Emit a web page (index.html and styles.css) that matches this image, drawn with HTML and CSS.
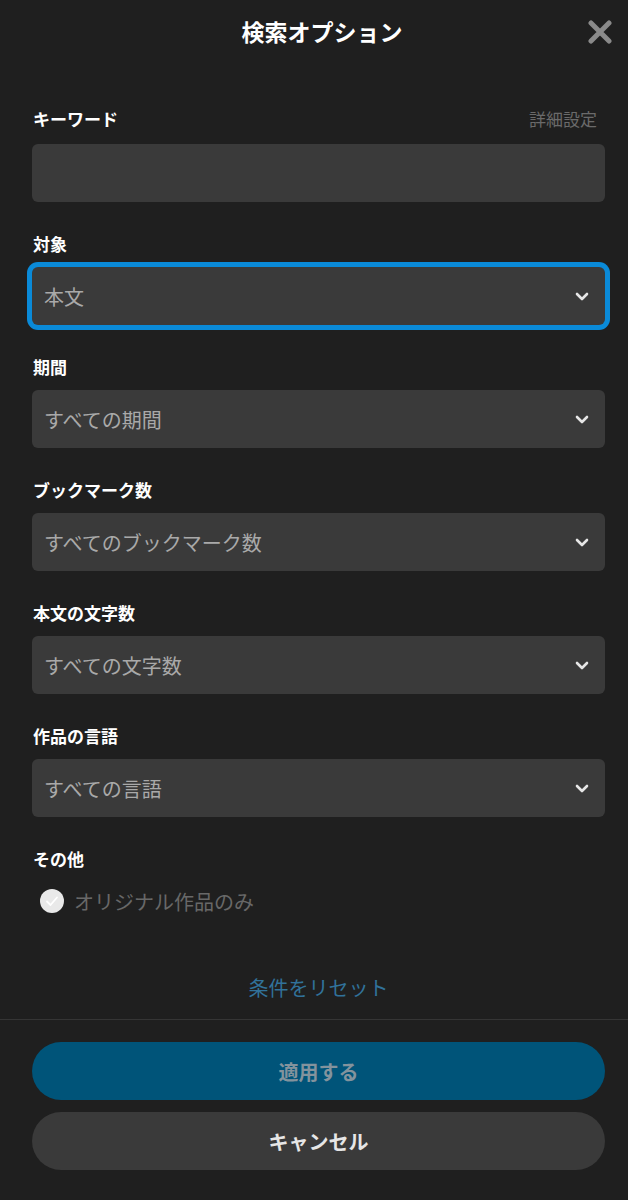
FILE: index.html
```html
<!DOCTYPE html>
<html lang="ja">
<head>
    <meta charset="UTF-8">
    <meta name="viewport" content="width=device-width, initial-scale=1.0">
    <title>検索オプション</title>
    <link rel="stylesheet" href="styles.css">
</head>
<body>
    <div class="sheet">
        <div class="header">
            <span></span>
            <h1>検索オプション</h1>
            <button class="close" type="button" aria-label="閉じる">
                <svg width="24" height="24" viewBox="0 0 24 24"><path d="M3 3 L21 21 M21 3 L3 21" stroke="#8a8a8a" stroke-width="5" stroke-linecap="round"/></svg>
            </button>
        </div>

        <form class="options">
            <div class="field">
                <div class="label-row">
                    <label for="keyword">キーワード</label>
                    <span class="advanced">詳細設定</span>
                </div>
                <input class="box" type="text" id="keyword">
            </div>

            <div class="field">
                <label>対象</label>
                <div class="box select focused">
                    <span>本文</span>
                    <svg class="chev" width="14" height="9" viewBox="0 0 14 9"><polyline points="2,2 7,7 12,2" fill="none" stroke="#e6e6e6" stroke-width="2.6" stroke-linecap="round" stroke-linejoin="round"/></svg>
                </div>
            </div>

            <div class="field">
                <label>期間</label>
                <div class="box select">
                    <span>すべての期間</span>
                    <svg class="chev" width="14" height="9" viewBox="0 0 14 9"><polyline points="2,2 7,7 12,2" fill="none" stroke="#e6e6e6" stroke-width="2.6" stroke-linecap="round" stroke-linejoin="round"/></svg>
                </div>
            </div>

            <div class="field">
                <label>ブックマーク数</label>
                <div class="box select">
                    <span>すべてのブックマーク数</span>
                    <svg class="chev" width="14" height="9" viewBox="0 0 14 9"><polyline points="2,2 7,7 12,2" fill="none" stroke="#e6e6e6" stroke-width="2.6" stroke-linecap="round" stroke-linejoin="round"/></svg>
                </div>
            </div>

            <div class="field">
                <label>本文の文字数</label>
                <div class="box select">
                    <span>すべての文字数</span>
                    <svg class="chev" width="14" height="9" viewBox="0 0 14 9"><polyline points="2,2 7,7 12,2" fill="none" stroke="#e6e6e6" stroke-width="2.6" stroke-linecap="round" stroke-linejoin="round"/></svg>
                </div>
            </div>

            <div class="field">
                <label>作品の言語</label>
                <div class="box select">
                    <span>すべての言語</span>
                    <svg class="chev" width="14" height="9" viewBox="0 0 14 9"><polyline points="2,2 7,7 12,2" fill="none" stroke="#e6e6e6" stroke-width="2.6" stroke-linecap="round" stroke-linejoin="round"/></svg>
                </div>
            </div>

            <div class="field other">
                <label>その他</label>
                <div class="check-row">
                    <span class="check">
                        <svg width="24" height="24" viewBox="0 0 24 24"><circle cx="12" cy="12" r="12" fill="#e9e9e9"/><polyline points="7,12.5 10.5,16 17,8.5" fill="none" stroke="#ffffff" stroke-width="1.8" stroke-linecap="round" stroke-linejoin="round"/></svg>
                    </span>
                    <span class="check-text">オリジナル作品のみ</span>
                </div>
            </div>

            <div class="reset">条件をリセット</div>
        </form>

        <div class="footer">
            <button class="btn apply" type="button">適用する</button>
            <button class="btn cancel" type="button">キャンセル</button>
        </div>
    </div>
</body>
</html>
```

FILE: styles.css
```css
body {
    margin: 0;
    background: #1f1f1f;
    font-family: "Noto Sans CJK JP", "Noto Sans", sans-serif;
    color: #fff;
}
.sheet {
    width: 628px;
    height: 1200px;
    display: flex;
    flex-direction: column;
}
.header {
    height: 66px;
    display: grid;
    grid-template-columns: 1fr auto 1fr;
    align-items: center;
    padding: 0 16px 0 32px;
}
.header h1 {
    margin: 0 0 4px;
    font-size: 23px;
    font-weight: bold;
    line-height: 30px;
    color: #fff;
}
.close {
    justify-self: end;
    background: none;
    border: none;
    padding: 0;
    width: 24px;
    height: 24px;
    margin-bottom: 2px;
    cursor: pointer;
}
.options {
    padding: 42px 23px 0 32px;
    display: flex;
    flex-direction: column;
}
.field {
    display: flex;
    flex-direction: column;
    margin-bottom: 31px;
}
.label-row {
    display: flex;
    justify-content: space-between;
    align-items: center;
    margin-bottom: 2px;
}
label {
    display: block;
    font-size: 17px;
    font-weight: bold;
    line-height: 22px;
    color: #fff;
    margin-left: 1px;
}
.advanced {
    font-size: 17px;
    line-height: 22px;
    color: #6a6a6a;
    margin-right: 8px;
}
.box {
    box-sizing: border-box;
    width: 100%;
    height: 58px;
    margin-top: 12px;
    background: #3a3a3a;
    border: none;
    border-radius: 6px;
    font-family: inherit;
}
.select {
    display: flex;
    align-items: center;
    justify-content: space-between;
    padding: 0 16px 0 12px;
    font-size: 20px;
    color: #a9a9a9;
}
.focused {
    box-shadow: 0 0 0 5px #0a8ad8;
}
.other {
    margin-bottom: 0;
}
.check-row {
    display: flex;
    align-items: center;
    gap: 10px;
    margin-top: 18px;
    height: 26px;
    padding-left: 8px;
}
.check {
    display: flex;
}
.check-text {
    font-size: 20px;
    color: #686868;
}
.reset {
    margin-top: 62px;
    text-align: center;
    font-size: 20px;
    line-height: 24px;
    color: #31729a;
}
.footer {
    margin-top: 19px;
    border-top: 1px solid #353535;
    padding: 22px 23px 0 32px;
    display: flex;
    flex-direction: column;
    gap: 12px;
}
.btn {
    height: 58px;
    border: none;
    border-radius: 29px;
    font-family: inherit;
    font-size: 20px;
    font-weight: bold;
    cursor: pointer;
}
.apply {
    background: #005479;
    color: #83939d;
}
.cancel {
    background: #3a3a3a;
    color: #e6e6e6;
}
```
